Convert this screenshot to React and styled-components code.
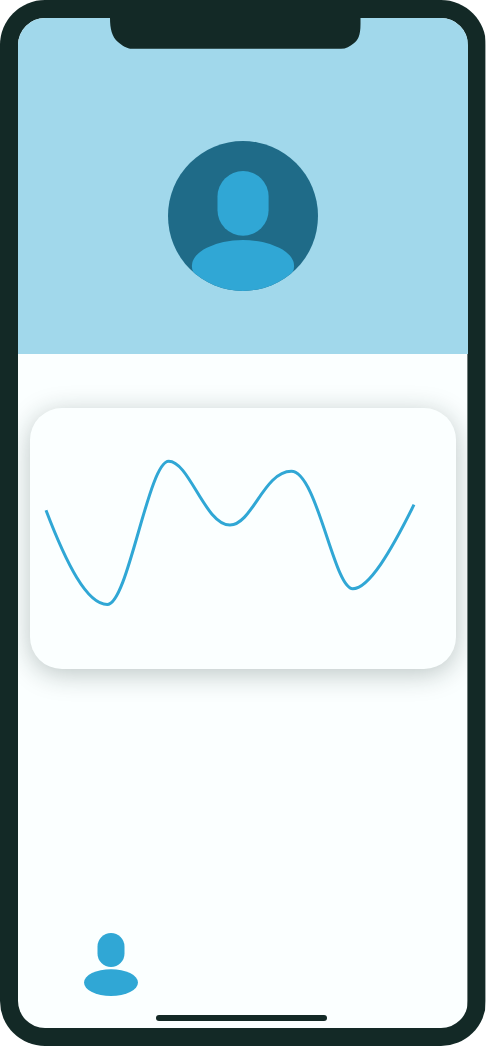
import React from "react";
import styled, { createGlobalStyle } from "styled-components";

const GlobalStyle = createGlobalStyle`
  body {
    margin: 0;
    background: #ffffff;
    overflow: hidden;
    font-family: "Liberation Sans", sans-serif;
  }
`;

const Phone = styled.main`
  position: relative;
  box-sizing: border-box;
  width: 486px;
  height: 1046px;
  padding: 18px;
  border-radius: 45px;
  background: linear-gradient(to right, #132926 485px, rgba(19, 41, 38, 0.4) 485px);
`;

const Screen = styled.div`
  display: flex;
  flex-direction: column;
  width: 450px;
  height: 100%;
  border-radius: 27px;
  background: linear-gradient(to right, #fbffff 449px, #6f7c7a 449px);
`;

const Hero = styled.header`
  display: flex;
  justify-content: center;
  box-sizing: border-box;
  width: 450px;
  height: 336px;
  flex: none;
  padding-top: 123px;
  border-radius: 27px 27px 0 0;
  background: #a1d8eb;
`;

const Notch = styled.svg`
  position: absolute;
  top: 17px;
  left: 110px;
  width: 251px;
  height: 32px;
`;

const Avatar = styled.div`
  width: 150px;
  height: 150px;
  border-radius: 50%;
  overflow: hidden;
  background: #1f6b88;
`;

const Drawing = styled.svg`
  display: block;
  width: ${({ $width }) => $width};
  height: ${({ $height }) => $height};
  fill: ${({ $fill }) => $fill || "none"};
`;

const Card = styled.section`
  width: 426px;
  height: 261px;
  flex: none;
  margin: 54px 0 0 12px;
  border-radius: 32px;
  background: #fbffff;
  box-shadow: 0 5px 27px rgba(19, 41, 38, 0.27);
  clip-path: inset(-60px -11px -60px -12px);
`;

const TabBar = styled.nav`
  display: flex;
  margin-top: auto;
  padding: 0 0 18px 66px;
`;

const HomeIndicator = styled.div`
  flex: none;
  width: 171px;
  height: 6px;
  margin: 0 0 7px 138px;
  border-radius: 3px;
  background: #132926;
`;

export default function App() {
  return (
    <>
      <GlobalStyle />
      <Phone>
        <Screen>
          <Hero>
            <Avatar>
              <Drawing $width="150px" $height="150px" $fill="#30a7d5" viewBox="0 0 150 150" aria-label="Profile picture">
                <rect x="49.5" y="30" width="51.1" height="64.8" rx="25.55" />
                <ellipse cx="75" cy="125" rx="51.1" ry="25.9" />
              </Drawing>
            </Avatar>
          </Hero>
          <Card>
            <Drawing $width="100%" $height="100%" viewBox="30 408 426 261" aria-label="Activity chart">
              <path
                d="M46 510.3C66.5 564 87 604.5 107.3 604.5C128 604.5 148.5 461.3 168.7 461.3C189.3 461.3 205 525 230 525C252 525 264 471.3 291.3 471.3C317 471.3 334 588.7 352.7 588.7C369 588.7 391 551 414 504.7"
                stroke="#30a7d5"
                strokeWidth="3"
              />
            </Drawing>
          </Card>
          <TabBar>
            <Drawing $width="54px" $height="64px" $fill="#30a7d5" viewBox="0 0 54 64" aria-label="Profile">
              <rect x="13.5" y="0" width="27" height="34" rx="13.5" />
              <ellipse cx="27" cy="49.6" rx="27" ry="13.4" />
            </Drawing>
          </TabBar>
          <HomeIndicator />
        </Screen>
        <Notch viewBox="0 0 251 32" aria-hidden="true">
          <path
            d="M0 0H250.5V7C250.5 19 248 23 243.5 26.5C240 29.5 236 31.8 231 31.8H22C17 31.8 12 28.5 8 25C2 20 0 12 0 1Z"
            fill="#132926"
          />
        </Notch>
      </Phone>
    </>
  );
}
